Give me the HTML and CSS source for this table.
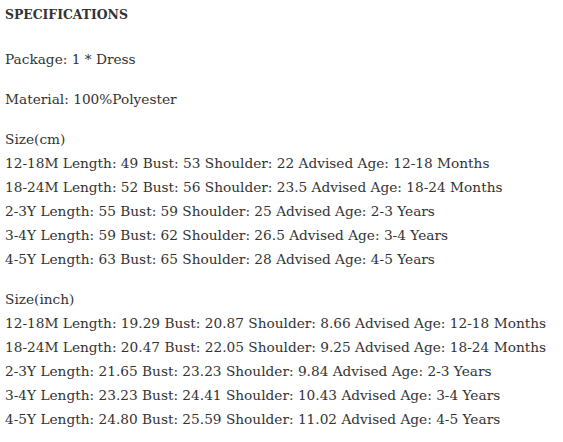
FILE: index.html
```html
<!DOCTYPE html>
<html>
<head>
<meta charset="utf-8">
<link rel="stylesheet" href="styles.css">
</head>
<body>
<div class="specs">
  <h3 class="specs-title">SPECIFICATIONS</h3>
  <p class="specs-p">Package: 1 * Dress</p>
  <p class="specs-p">Material: 100%Polyester</p>
  <p class="specs-p">Size(cm)<br>12-18M Length: 49 Bust: 53 Shoulder: 22 Advised Age: 12-18 Months<br>18-24M Length: 52 Bust: 56 Shoulder: 23.5 Advised Age: 18-24 Months<br>2-3Y Length: 55 Bust: 59 Shoulder: 25 Advised Age: 2-3 Years<br>3-4Y Length: 59 Bust: 62 Shoulder: 26.5 Advised Age: 3-4 Years<br>4-5Y Length: 63 Bust: 65 Shoulder: 28 Advised Age: 4-5 Years</p>
  <p class="specs-p">Size(inch)<br>12-18M Length: 19.29 Bust: 20.87 Shoulder: 8.66 Advised Age: 12-18 Months<br>18-24M Length: 20.47 Bust: 22.05 Shoulder: 9.25 Advised Age: 18-24 Months<br>2-3Y Length: 21.65 Bust: 23.23 Shoulder: 9.84 Advised Age: 2-3 Years<br>3-4Y Length: 23.23 Bust: 24.41 Shoulder: 10.43 Advised Age: 3-4 Years<br>4-5Y Length: 24.80 Bust: 25.59 Shoulder: 11.02 Advised Age: 4-5 Years</p>
</div>
</body>
</html>
```
FILE: styles.css
```css
html, body {
  margin: 0;
  padding: 0;
  background: #ffffff;
}
.specs {
  padding: 1px 5px 0;
  font-family: "DejaVu Serif", Georgia, serif;
  font-size: 13.7px;
  line-height: 24px;
  color: #333333;
}
.specs-title {
  margin: 2px 0 20px;
  font-size: 12.4px;
  font-weight: bold;
  line-height: 24px;
}
.specs-p {
  margin: 0 0 16px;
}
```
